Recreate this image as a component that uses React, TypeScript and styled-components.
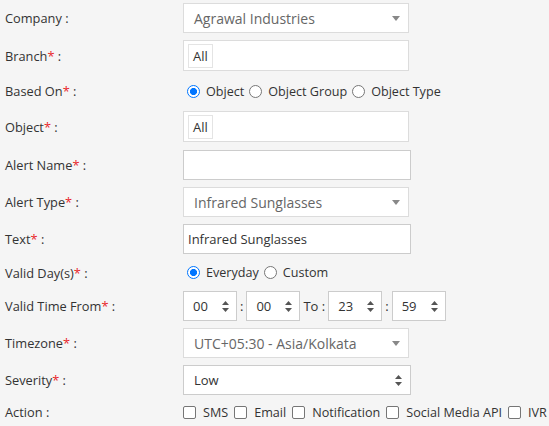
import styled, { createGlobalStyle } from "styled-components";

const GlobalStyle = createGlobalStyle`
  html, body {
    margin: 0;
    padding: 0;
    background: #f5f5f5;
  }
  body {
    font-family: "Open Sans", "Liberation Sans", sans-serif;
    font-size: 13px;
    color: #333;
  }
`;

const Form = styled.div`
  display: flex;
  flex-direction: column;
  padding: 3px 0 0 5px;
  width: 549px;
  height: 426px;
  box-sizing: border-box;
  overflow: hidden;
`;

const Row = styled.div<{ $h?: number; $mb?: number }>`
  display: grid;
  grid-template-columns: 178px 1fr;
  align-items: center;
  flex: none;
  height: ${(p) => p.$h ?? 30}px;
  margin-bottom: ${(p) => p.$mb ?? 7}px;
`;

const Label = styled.div`
  font-size: 12.8px;
  color: #333;
  white-space: nowrap;
`;

const Star = styled.span`
  color: #e8262a;
`;

const Select2Box = styled.div`
  box-sizing: border-box;
  width: 226px;
  height: 30px;
  background: #fff;
  border: 1px solid #dcdcdc;
  display: flex;
  align-items: center;
  justify-content: space-between;
  padding: 0 8px 0 10px;
  font-size: 14px;
  color: #666;
`;

const InputBox = styled.div<{ $pl?: number }>`
  box-sizing: border-box;
  width: 228px;
  height: 30px;
  background: #fff;
  border: 1px solid #ccc;
  display: flex;
  align-items: center;
  justify-content: space-between;
  padding: 0 8px 0 ${(p) => p.$pl ?? 4}px;
  font-size: 13px;
  color: #333;
`;

const TagBox = styled.div`
  box-sizing: border-box;
  width: 226px;
  height: 31px;
  background: #fff;
  border: 1px solid #dcdcdc;
  display: flex;
  align-items: center;
  padding: 0 4px;
`;

const Tag = styled.span`
  border: 1px solid #e4e4e4;
  padding: 2px 4px;
  font-size: 13px;
  color: #333;
  line-height: 18px;
`;

const Options = styled.div<{ $pl?: number }>`
  display: flex;
  align-items: center;
  padding-left: ${(p) => p.$pl ?? 0}px;
  font-size: 12.6px;
  color: #333;
  white-space: nowrap;
`;

const Option = styled.label<{ $gap: number; $mr: number }>`
  display: flex;
  align-items: center;
  gap: ${(p) => p.$gap}px;
  margin-right: ${(p) => p.$mr}px;
`;

const RadioMark = styled.span<{ $on?: boolean }>`
  box-sizing: border-box;
  width: 13px;
  height: 13px;
  border-radius: 50%;
  border: 1px solid ${(p) => (p.$on ? "#0075ff" : "#767676")};
  background: ${(p) => (p.$on ? "radial-gradient(circle, #0075ff 0 3.3px, #fff 3.8px)" : "#fff")};
`;

const CheckMark = styled.span`
  box-sizing: border-box;
  width: 13px;
  height: 13px;
  border-radius: 2px;
  border: 1px solid #767676;
  background: #fff;
`;

const TimeRow = styled.div`
  display: flex;
  align-items: center;
  gap: 3px;
  font-size: 13px;
  color: #333;
`;

const SpinBox = styled.div`
  box-sizing: border-box;
  width: 54px;
  height: 30px;
  background: #fff;
  border: 1px solid #ccc;
  display: flex;
  align-items: center;
  justify-content: space-between;
  padding: 0 7px 0 9px;
`;

const Caret = () => (
  <svg width="8" height="5" viewBox="0 0 8 5">
    <path d="M0 0h8L4 5z" fill="#888" />
  </svg>
);

const UpDown = () => (
  <svg width="7" height="11" viewBox="0 0 7 11">
    <path d="M3.5 0L7 4H0z M3.5 11L7 7H0z" fill="#555" />
  </svg>
);

function Radios({ items, checked }: { items: string[]; checked: number }) {
  return (
    <Options $pl={4}>
      {items.map((t, i) => (
        <Option key={t} $gap={6} $mr={5}>
          <RadioMark $on={i === checked} />
          {t}
        </Option>
      ))}
    </Options>
  );
}

function Spin({ value }: { value: string }) {
  return (
    <SpinBox>
      {value}
      <UpDown />
    </SpinBox>
  );
}

export default function App() {
  return (
    <>
      <GlobalStyle />
      <Form>
        <Row>
          <Label>Company :</Label>
          <Select2Box>
            Agrawal Industries
            <Caret />
          </Select2Box>
        </Row>
        <Row $h={31}>
          <Label>
            Branch<Star>*</Star> :
          </Label>
          <TagBox>
            <Tag>All</Tag>
          </TagBox>
        </Row>
        <Row $h={26}>
          <Label>
            Based On<Star>*</Star> :
          </Label>
          <Radios items={["Object", "Object Group", "Object Type"]} checked={0} />
        </Row>
        <Row $h={31} $mb={8}>
          <Label>
            Object<Star>*</Star> :
          </Label>
          <TagBox>
            <Tag>All</Tag>
          </TagBox>
        </Row>
        <Row>
          <Label>
            Alert Name<Star>*</Star> :
          </Label>
          <InputBox />
        </Row>
        <Row>
          <Label>
            Alert Type<Star>*</Star> :
          </Label>
          <Select2Box>
            Infrared Sunglasses
            <Caret />
          </Select2Box>
        </Row>
        <Row>
          <Label>
            Text<Star>*</Star> :
          </Label>
          <InputBox>Infrared Sunglasses</InputBox>
        </Row>
        <Row $h={23}>
          <Label>
            Valid Day(s)<Star>*</Star> :
          </Label>
          <Radios items={["Everyday", "Custom"]} checked={0} />
        </Row>
        <Row>
          <Label>
            Valid Time From<Star>*</Star> :
          </Label>
          <TimeRow>
            <Spin value="00" />:<Spin value="00" />
            To :
            <Spin value="23" />:<Spin value="59" />
          </TimeRow>
        </Row>
        <Row>
          <Label>
            Timezone<Star>*</Star> :
          </Label>
          <Select2Box>
            UTC+05:30 - Asia/Kolkata
            <Caret />
          </Select2Box>
        </Row>
        <Row>
          <Label>
            Severity<Star>*</Star> :
          </Label>
          <InputBox $pl={10}>
            Low
            <UpDown />
          </InputBox>
        </Row>
        <Row $h={20}>
          <Label>Action :</Label>
          <Options>
            {["SMS", "Email", "Notification", "Social Media API", "IVR"].map((t) => (
              <Option key={t} $gap={7} $mr={6}>
                <CheckMark />
                {t}
              </Option>
            ))}
          </Options>
        </Row>
      </Form>
    </>
  );
}
